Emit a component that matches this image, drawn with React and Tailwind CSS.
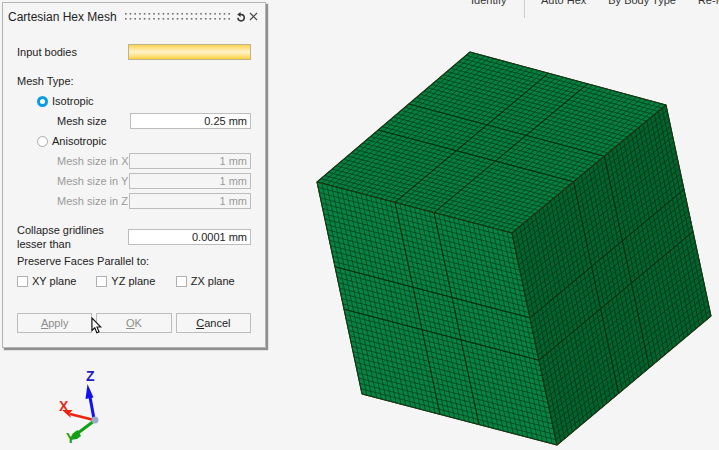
import clsx from 'clsx'

const ribbonItems = ['Auto Hex', 'By Body Type', 'Re-Mesh']

const axes = ['X', 'Y', 'Z']
const planes = ['XY plane', 'YZ plane', 'ZX plane']

const CELLS = 40

// corners run around each face
const faces = [
  { name: 'top', fill: '#067f41', line: '#023f1c', corners: [[317, 182], [512, 233], [666, 105], [470, 52]] },
  { name: 'front', fill: '#078443', line: '#02431e', corners: [[317, 182], [512, 233], [557, 445], [362, 394]] },
  { name: 'side', fill: '#04642f', line: '#023516', corners: [[512, 233], [666, 105], [711, 316], [557, 445]] },
]

function between(p, q, t) {
  return `${p[0] + (q[0] - p[0]) * t} ${p[1] + (q[1] - p[1]) * t}`
}

function gridPath([a, b, c, d], steps) {
  return steps
    .map((t) => `M${between(a, b, t)}L${between(d, c, t)}M${between(a, d, t)}L${between(b, c, t)}`)
    .join('')
}

const fineSteps = Array.from({ length: CELLS - 1 }, (_, i) => (i + 1) / CELLS)

function MeshCube() {
  return (
    <svg viewBox="300 20 419 430" className="block w-full" role="img" aria-label="Meshed cube">
      {faces.map(({ name, fill, line, corners }) => {
        const outline = `M${corners.map((p) => p.join(' ')).join('L')}z`
        return (
          <g key={name} fill="none" stroke={line} strokeLinejoin="round">
            <path d={outline} fill={fill} />
            <path d={gridPath(corners, fineSteps)} strokeWidth="0.8" />
            <path d={gridPath(corners, [0.4, 0.6])} stroke="#02300f" strokeWidth="1.1" />
            <path d={outline} stroke="#1c3510" strokeWidth="1.1" />
          </g>
        )
      })}
    </svg>
  )
}

function AxisTriad() {
  return (
    <svg viewBox="40 365 100 85" className="ml-10 mt-4 block w-[100px]" role="img" aria-label="Axes">
      <g fontFamily="Liberation Sans, sans-serif" fontWeight="bold" fontSize="14">
        <path d="M94 420L90 398" stroke="#1010f0" strokeWidth="3" />
        <path d="M87.500 385L85.500 400L93.500 398.500z" fill="#1010f0" />
        <path d="M94 421L70 415" stroke="#f02010" strokeWidth="2.500" />
        <path d="M62 411L72.500 411L69.500 414.500L71 419z" fill="#f02010" />
        <path d="M94 422L78 434" stroke="#10a018" strokeWidth="3" />
        <path d="M70 441L74.500 433L78 431L81 437L77 440z" fill="#10a018" />
        <text x="86" y="382" fill="#1c1cc0">Z</text>
        <text x="59" y="412" fill="#e02a1c">X</text>
        <text x="66" y="444" fill="#189a20">Y</text>
        <circle cx="95" cy="421" r="3.500" fill="#9aaccb" />
      </g>
    </svg>
  )
}

function ValueField({ id, label, value, disabled, indent }) {
  return (
    <div className={clsx('flex h-5 items-center justify-between', indent && 'pl-10', disabled && 'text-[#9a9a9a]')}>
      <label htmlFor={id}>{label}</label>
      <input
        id={id}
        defaultValue={value}
        disabled={disabled}
        className={clsx(
          'h-4 border border-[#bdbdbd] px-[3px] text-right',
          disabled ? 'w-[122px] bg-[#f5f5f5]' : 'w-[121px] bg-white'
        )}
      />
    </div>
  )
}

function TypeOption({ label, checked }) {
  return (
    <label className="flex h-5 items-center gap-1 pl-5">
      <input
        type="radio"
        name="meshType"
        defaultChecked={checked}
        className="size-[11px] appearance-none rounded-full border border-[#aaaaaa] bg-white checked:border-[3px] checked:border-[#0a9be3]"
      />
      {label}
    </label>
  )
}

function ActionButton({ label, disabled }) {
  return (
    <button
      type="button"
      disabled={disabled}
      className="h-5 border border-[#bdbdbd] bg-[#f6f6f6] text-[#1c1c1c] disabled:text-[#8c8c8c]"
    >
      <span className="underline">{label[0]}</span>
      {label.slice(1)}
    </button>
  )
}

function MeshDialog() {
  return (
    <form className="ml-[2px] mt-[2px] w-[264px] border border-[#b5b5b5] bg-[#f5f5f5] shadow-[2px_2px_1px_#8f8f8f]">
      <div className="flex h-[27px] items-center pl-[5px] pr-[7px]">
        <h1 className="text-[12px]">Cartesian Hex Mesh</h1>
        <svg viewBox="0 0 108 8" className="ml-auto h-2 w-[108px]" fill="#6f6f6f" aria-hidden="true">
          {Array.from({ length: 23 }, (_, i) =>
            [0, 5].map((y) => <rect key={`${i}-${y}`} x={1 + i * 4.700} y={y} width="1.600" height="1.600" />)
          )}
        </svg>
        <button type="button" aria-label="Reset" className="ml-1">
          <svg viewBox="0 0 10 10" className="size-[10px]" fill="none" stroke="#333333" strokeWidth="1.500">
            <path d="M3.500 2.500H5.300A3.200 3.200 0 1 1 1.900 5.800" />
            <path d="M4.600 0L1.200 2.500L4.600 5z" fill="#333333" stroke="none" />
          </svg>
        </button>
        <button type="button" aria-label="Close" className="ml-[3px]">
          <svg viewBox="0 0 9 9" className="size-[9px]" stroke="#444444" strokeWidth="1.200">
            <path d="M1 1L8 8M8 1L1 8" />
          </svg>
        </button>
      </div>

      <div className="px-[14px] pb-[14px] pt-3">
        <div className="flex h-5 items-center justify-between">
          <label htmlFor="bodies">Input bodies</label>
          <input
            id="bodies"
            className="h-4 w-[123px] border border-[#bdb48e] bg-linear-to-b from-[#fdd34a] via-[#fff3c8] to-[#fdd034]"
          />
        </div>

        <fieldset className="mt-[9px]">
          <legend className="h-5 leading-5">Mesh Type:</legend>
          <TypeOption label="Isotropic" checked />
          <ValueField id="size" label="Mesh size" value="0.25 mm" indent />
          <TypeOption label="Anisotropic" />
          {axes.map((axis) => (
            <ValueField key={axis} id={`size-${axis}`} label={`Mesh size in ${axis}`} value="1 mm" disabled indent />
          ))}
        </fieldset>

        <div className="mt-3 flex h-7 items-center justify-between">
          <label htmlFor="collapse" className="w-[100px] leading-[14px]">
            Collapse gridlines lesser than
          </label>
          <input
            id="collapse"
            defaultValue="0.0001 mm"
            className="h-4 w-[123px] border border-[#bdbdbd] bg-white px-[3px] text-right"
          />
        </div>

        <fieldset>
          <legend className="h-5 leading-5">Preserve Faces Parallel to:</legend>
          <div className="grid grid-cols-3 gap-1">
            {planes.map((plane) => (
              <label key={plane} className="flex h-5 items-center gap-1">
                <input type="checkbox" className="size-[11px] appearance-none border border-[#b0b0b0] bg-white" />
                {plane}
              </label>
            ))}
          </div>
        </fieldset>

        <div className="relative mt-[22px] grid grid-cols-3 gap-1">
          <ActionButton label="Apply" disabled />
          <ActionButton label="OK" disabled />
          <ActionButton label="Cancel" />
          <svg viewBox="0 0 11 17" className="absolute left-[74px] top-1 h-[17px] w-[11px]" aria-hidden="true">
            <path
              d="M1 1V13.500L3.800 10.800L5.800 15.800L8 14.800L6 10H9.800z"
              fill="#ffffff"
              stroke="#111111"
              strokeWidth="1.1"
            />
          </svg>
        </div>
      </div>
    </form>
  )
}

function App() {
  return (
    <div className="flex min-h-screen items-start overflow-hidden bg-[#f5f5f5] font-['Liberation_Sans',sans-serif] text-[11px] leading-4 text-[#222222]">
      <aside className="w-[300px] shrink-0">
        <MeshDialog />
        <AxisTriad />
      </aside>
      <main className="min-w-0 flex-1">
        <nav className="flex h-5 items-start overflow-hidden whitespace-nowrap pl-[171px] text-[#333333]">
          <div className="flex h-2 w-[53px] shrink-0 items-end">Identify</div>
          <div className="h-[18px] w-px shrink-0 bg-[#cccccc]" />
          <div className="flex h-2 shrink-0 items-end gap-[22px] pl-4">
            {ribbonItems.map((item) => (
              <span key={item}>{item}</span>
            ))}
          </div>
        </nav>
        <MeshCube />
      </main>
    </div>
  )
}

export default App
